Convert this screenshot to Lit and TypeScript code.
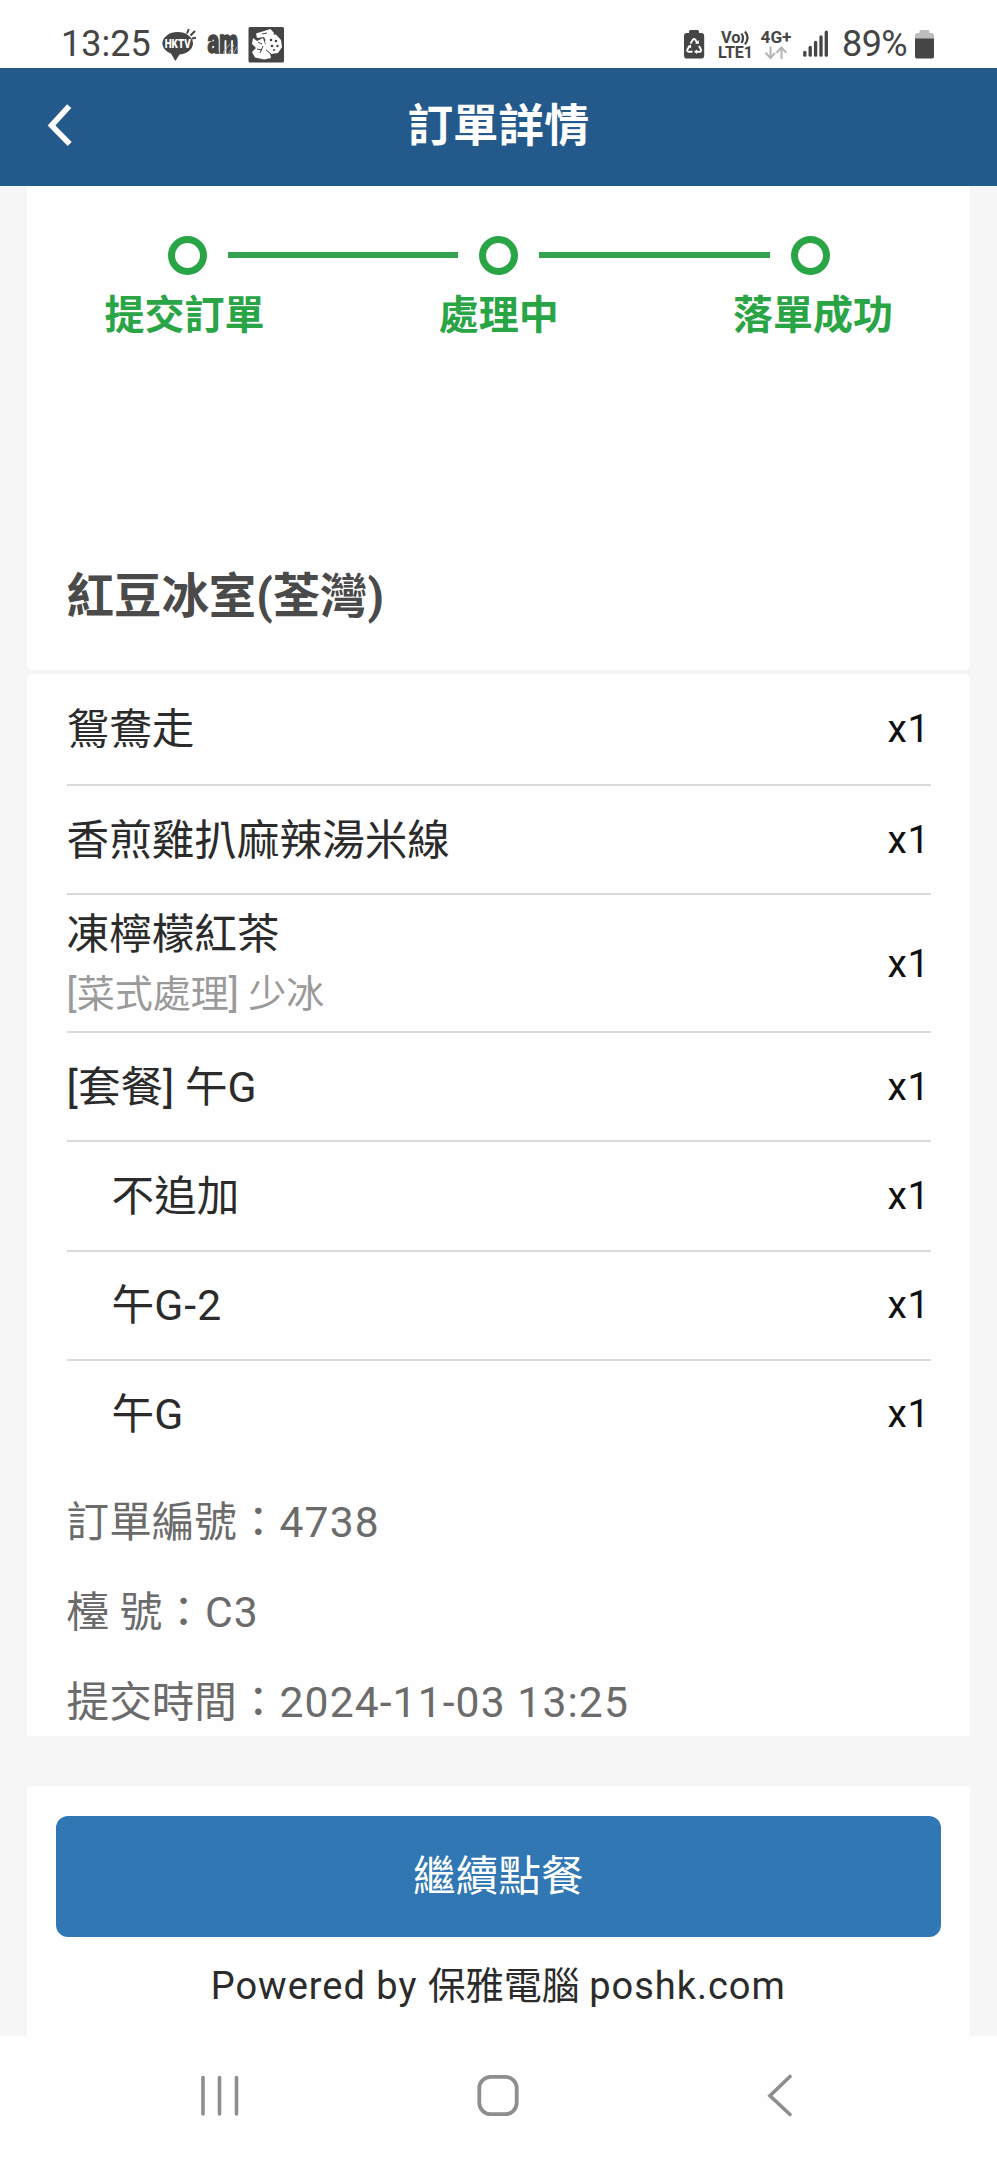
import { LitElement, html, css, svg, nothing } from "lit";
import { customElement, property } from "lit/decorators.js";

interface OrderItem {
  name: string;
  qty: number;
  note?: string;
  child?: boolean;
}

const STEPS = ["提交訂單", "處理中", "落單成功"];

const ITEMS: OrderItem[] = [
  { name: "鴛鴦走", qty: 1 },
  { name: "香煎雞扒麻辣湯米線", qty: 1 },
  { name: "凍檸檬紅茶", qty: 1, note: "[菜式處理] 少冰" },
  { name: "[套餐] 午G", qty: 1 },
  { name: "不追加", qty: 1, child: true },
  { name: "午G-2", qty: 1, child: true },
  { name: "午G", qty: 1, child: true },
];

const INFO = ["訂單編號：4738", "檯 號：C3", "提交時間：2024-11-03 13:25"];

@customElement("status-bar")
export class StatusBar extends LitElement {
  static styles = css`
    :host {
      display: flex;
      justify-content: space-between;
      height: 68px;
      background: #fefefe;
      color: #454545;
    }
    .side {
      display: flex;
      align-items: flex-start;
    }
    .left {
      padding-left: 61px;
    }
    .right {
      padding-right: 63px;
    }
    .clock,
    .percent {
      font-size: 36px;
      line-height: 42px;
      padding-top: 23px;
      white-space: nowrap;
    }
    .clock {
      width: 99px;
    }
    .percent {
      width: 73px;
      letter-spacing: -0.6px;
    }
    svg {
      display: block;
      height: 68px;
    }
    text {
      font-family: Roboto, sans-serif;
    }
  `;

  render() {
    return html`
      <div class="side left">
        <span class="clock">13:25</span>
        <svg width="128" viewBox="160 0 128 68">
          <ellipse cx="177.7" cy="43.3" rx="15.3" ry="11.2" fill="#454545" />
          <path d="M169.5 51 L180.5 53 L175.3 61 Z" fill="#454545" />
          <path d="M187 33.5 L188.8 29 M190.5 35.5 L195 31 M192 38.4 L196 37.8" stroke="#454545" stroke-width="2" fill="none" />
          <text x="177.7" y="47.8" text-anchor="middle" font-size="12" font-weight="900" fill="#fff" textLength="26" lengthAdjust="spacingAndGlyphs">HKTV</text>
          <text x="207.5" y="53.2" font-size="33" font-weight="900" fill="#454545" stroke="#454545" stroke-width="1.4" textLength="30.5" lengthAdjust="spacingAndGlyphs">am</text>
          <path d="M223 53 L230 44 M228 54 L234 45 M233 54 L237 47" stroke="#bbb" stroke-width="0.8" />
          <rect x="248.5" y="27" width="35.5" height="35.5" rx="1.5" fill="#454545" />
          <path d="M256 33.5 L270.5 29 L274 33 L272 40 L266 41 L264 37 L257 38 Z" fill="#fefefe" />
          <path d="M253 38 L257 41 L263 38 L265 44 L269 49 L271 58 L264 59.5 L255 57.5 L252 52 L256 48 L252 44 Z" fill="#fefefe" />
          <path d="M269 35 L276 34.5 L281 40 L282 47 L278 53 L271 54 L266 48 L265 41 Z" fill="#fefefe" />
          <path d="M257 49 L262 50 M260 53 L263 46 M266 50 L271 54 M258 42 L262 44 M262 34 L267 33" stroke="#454545" stroke-width="1" fill="none" />
          <g fill="#454545">
            <circle cx="271" cy="40" r="1.3" />
            <circle cx="276" cy="41" r="1.3" />
            <circle cx="272" cy="46" r="1.3" />
            <circle cx="277.5" cy="46" r="1.2" />
            <circle cx="274" cy="50" r="1.1" />
          </g>
        </svg>
      </div>
      <div class="side right">
        <svg width="162" viewBox="681 0 162 68">
          <path d="M690 33 V31.5 Q690 30 691.5 30 H698.5 Q700 30 700 31.5 V33 H702 Q705.2 33 705.2 36.2 V55.5 Q705.2 58.6 702 58.6 H688 Q685 58.6 685 55.5 V36.2 Q685 33 688 33 Z" fill="#454545" />
          <g fill="none" stroke="#fefefe" stroke-width="1.9" stroke-linejoin="round">
            <path d="M691.5 43.5 L694 39.6 Q695.1 38.2 696.2 39.6 L698.3 43" />
            <path d="M700 46 L702 49.6 Q702.5 51.5 700.5 51.7 H697" />
            <path d="M693.5 51.7 H689.5 Q687.5 51.3 688.4 49.4 L690.5 46" />
          </g>
          <path d="M696 43.8 L700 43.8 L699.6 40 Z M698 49.4 V54 L695 51.7 Z M688.4 46.2 L692 44.4 L692.2 48.3 Z" fill="#fefefe" />
          <g fill="#454545" font-weight="700">
            <text x="722" y="43" font-size="17" textLength="19.5" lengthAdjust="spacingAndGlyphs">Vo</text>
            <text x="719" y="58.3" font-size="16.3" textLength="35" lengthAdjust="spacingAndGlyphs">LTE1</text>
            <text x="761.5" y="43" font-size="17" textLength="31" lengthAdjust="spacingAndGlyphs">4G+</text>
          </g>
          <path d="M742.5 33.5 Q745.5 38 742.5 43 M746 31.5 Q751 37.5 746 44.3" stroke="#454545" stroke-width="2.2" fill="none" />
          <path d="M771.5 46.5 V57.5 M766.5 52.8 L771.5 58 L776 53 M782.5 59 V48 M777.5 52.7 L782.5 47.5 L787.3 52.7" stroke="#b5b5b5" stroke-width="2" fill="none" />
          <g stroke="#454545" stroke-width="3.3" stroke-linecap="round">
            ${[
              [805.8, 52.3],
              [811.2, 47.5],
              [816.6, 42.5],
              [822, 37],
              [827.3, 32.2],
            ].map(([x, y]) => svg`<line x1=${x} x2=${x} y1=${y} y2="55.2" />`)}
          </g>
        </svg>
        <span class="percent">89%</span>
        <svg width="19" viewBox="915 0 19 68">
          <path d="M915 39 V35.5 Q915 33 917.5 33 H919.5 V31.5 Q919.5 30 921 30 H928 Q929.5 30 929.5 31.5 V33 H931.5 Q934 33 934 35.5 V39 Z" fill="#bdbdbd" />
          <path d="M915 38.5 H934 V56 Q934 58.6 931.5 58.6 H917.5 Q915 58.6 915 56 Z" fill="#454545" />
        </svg>
      </div>
    `;
  }
}

@customElement("order-steps")
export class OrderSteps extends LitElement {
  static styles = css`
    :host {
      display: block;
      padding: 50px 77px 0 78px;
      color: #2aa546;
    }
    .track {
      display: flex;
      align-items: center;
      padding: 0 63px 0 63px;
      gap: 21px;
    }
    .dot {
      box-sizing: border-box;
      flex: none;
      width: 39px;
      height: 39px;
      border: 7px solid #2aa546;
      border-radius: 50%;
    }
    .line {
      flex: 1;
      height: 6px;
      background: #34a350;
    }
    .labels {
      display: grid;
      grid-template-columns: 160px 1fr 160px;
      margin-top: 11px;
      font-size: 40px;
      line-height: 60px;
      font-weight: 700;
      text-align: center;
      white-space: nowrap;
    }
  `;

  render() {
    return html`
      <div class="track">
        ${STEPS.map((_, i) => html`${i ? html`<i class="line"></i>` : nothing}<i class="dot"></i>`)}
      </div>
      <div class="labels">${STEPS.map((s) => html`<span>${s}</span>`)}</div>
    `;
  }
}

/** Wraps runs of Latin text so that they get their own tracking. */
const tracked = (text: string) =>
  text
    .split(/([A-Za-z0-9][A-Za-z0-9\-:. ]*)/)
    .map((part, i) => (i % 2 ? html`<span class="latin">${part}</span>` : part));

@customElement("order-row")
export class OrderRow extends LitElement {
  @property({ attribute: false }) item!: OrderItem;

  static styles = css`
    :host {
      display: block;
    }
    .row {
      display: flex;
      align-items: center;
      justify-content: space-between;
      height: 100%;
      padding-right: 1px;
      white-space: nowrap;
    }
    .row.noted {
      box-sizing: border-box;
      padding-top: 1px;
    }
    .child {
      padding-left: 45px;
    }
    .name {
      font-size: 42.6px;
      line-height: 60px;
      color: #2b2b2b;
    }
    .note {
      font-size: 38px;
      line-height: 60px;
      color: #9a9a9a;
    }
    .qty {
      font-size: 39px;
      line-height: 60px;
      letter-spacing: 0.6px;
      color: #111;
    }
    .latin {
      letter-spacing: 0.026em;
    }
  `;

  render() {
    const { name, qty, note, child } = this.item;
    return html`
      <div class="row ${child ? "child" : ""} ${note ? "noted" : ""}">
        <div>
          <div class="name">${tracked(name)}</div>
          ${note ? html`<div class="note">${note}</div>` : nothing}
        </div>
        <div class="qty">x${qty}</div>
      </div>
    `;
  }
}

@customElement("app-root")
export class AppRoot extends LitElement {
  static styles = css`
    :host {
      display: flex;
      flex-direction: column;
      width: 997px;
      height: 2160px;
      overflow: hidden;
      background: #f6f6f6;
      font-family: Roboto, "Noto Sans CJK TC", sans-serif;
    }
    .header {
      display: grid;
      grid-template-columns: 110px 1fr 110px;
      align-items: center;
      height: 117.5px;
      background: #23598b;
      color: #fff;
    }
    .back {
      display: block;
      margin: -3px 0 0 46px;
    }
    .title {
      margin: 0;
      text-align: center;
      font-size: 45.4px;
      line-height: 60px;
      font-weight: 700;
    }
    .card {
      box-sizing: border-box;
      margin: 0 27px 0 26.6px;
      background: #fefefe;
      border-radius: 5px;
    }
    .summary {
      height: 484.5px;
      border-top-left-radius: 0;
      border-top-right-radius: 0;
    }
    .shop {
      margin: 221px 0 0;
      padding-left: 40px;
      font-size: 47.4px;
      line-height: 60px;
      font-weight: 700;
      color: #4a4a4a;
    }
    .order {
      height: 1062px;
      margin-top: 4px;
      padding: 0 39px 0 40px;
      border-radius: 5px 5px 0 0;
    }
    .item {
      box-sizing: border-box;
      height: 109.2px;
      border-bottom: 2px solid #dadada;
    }
    .item:first-child {
      height: 112px;
    }
    .item.tall {
      height: 138px;
    }
    .item:last-child {
      height: 107px;
      border-bottom: 0;
    }
    .info {
      display: grid;
      gap: 30px;
      margin-top: 24.5px;
      font-size: 42.6px;
      line-height: 60px;
      color: #6b6b6b;
      white-space: nowrap;
    }
    .latin {
      letter-spacing: 0.026em;
    }
    .actions {
      height: 250px;
      margin-top: 50px;
      padding: 30px 29.5px 0;
      border-radius: 3px 3px 0 0;
    }
    .button {
      display: block;
      box-sizing: border-box;
      width: 100%;
      height: 121px;
      padding: 0;
      border: 0;
      border-radius: 12px;
      background: #3077b4;
      color: #fff;
      font: 42.6px/121px Roboto, "Noto Sans CJK TC", sans-serif;
      text-align: center;
    }
    .powered {
      margin: 0;
      padding-top: 19px;
      text-align: center;
      font-size: 38px;
      line-height: 60px;
      color: #2b2b2b;
      white-space: nowrap;
    }
    .nav {
      display: grid;
      grid-template-columns: 44px 44px 28px;
      justify-content: space-between;
      box-sizing: border-box;
      height: 124px;
      padding: 38px 203px 0 198px;
      background: #fefefe;
    }
    .nav svg {
      display: block;
    }
    .home {
      margin-left: -6.5px;
    }
  `;

  render() {
    return html`
      <status-bar></status-bar>
      <header class="header">
        <svg class="back" width="28" height="46" viewBox="0 0 28 46">
          <path d="M23.2 4.2 L5.5 23.5 L23.7 42" fill="none" stroke="#fff" stroke-width="5.6" />
        </svg>
        <h1 class="title">訂單詳情</h1>
      </header>
      <section class="card summary">
        <order-steps></order-steps>
        <h2 class="shop">紅豆冰室(荃灣)</h2>
      </section>
      <section class="card order">
        <div>
          ${ITEMS.map((item) => html`<order-row class="item ${item.note ? "tall" : ""}" .item=${item}></order-row>`)}
        </div>
        <div class="info">${INFO.map((t) => html`<div>${tracked(t)}</div>`)}</div>
      </section>
      <section class="card actions">
        <button class="button">繼續點餐</button>
        <p class="powered">${tracked("Powered by 保雅電腦 poshk.com")}</p>
      </section>
      <nav class="nav">
        <svg width="44" height="44" viewBox="0 0 44 44">
          <path d="M5 3.5 V40 M21.5 3.5 V40 M38.5 3.5 V40" stroke="#8e8e8c" stroke-width="3.6" stroke-linecap="round" />
        </svg>
        <svg class="home" width="44" height="44" viewBox="0 0 44 44">
          <rect x="3.3" y="2.8" width="37.4" height="37.4" rx="11.5" fill="none" stroke="#8e8e8e" stroke-width="3.8" />
        </svg>
        <svg width="28" height="44" viewBox="0 0 28 44">
          <path d="M24 2.5 L4 21.7 L24 40.5" fill="none" stroke="#8e8e8e" stroke-width="3.6" stroke-linecap="round" />
        </svg>
      </nav>
    `;
  }
}
